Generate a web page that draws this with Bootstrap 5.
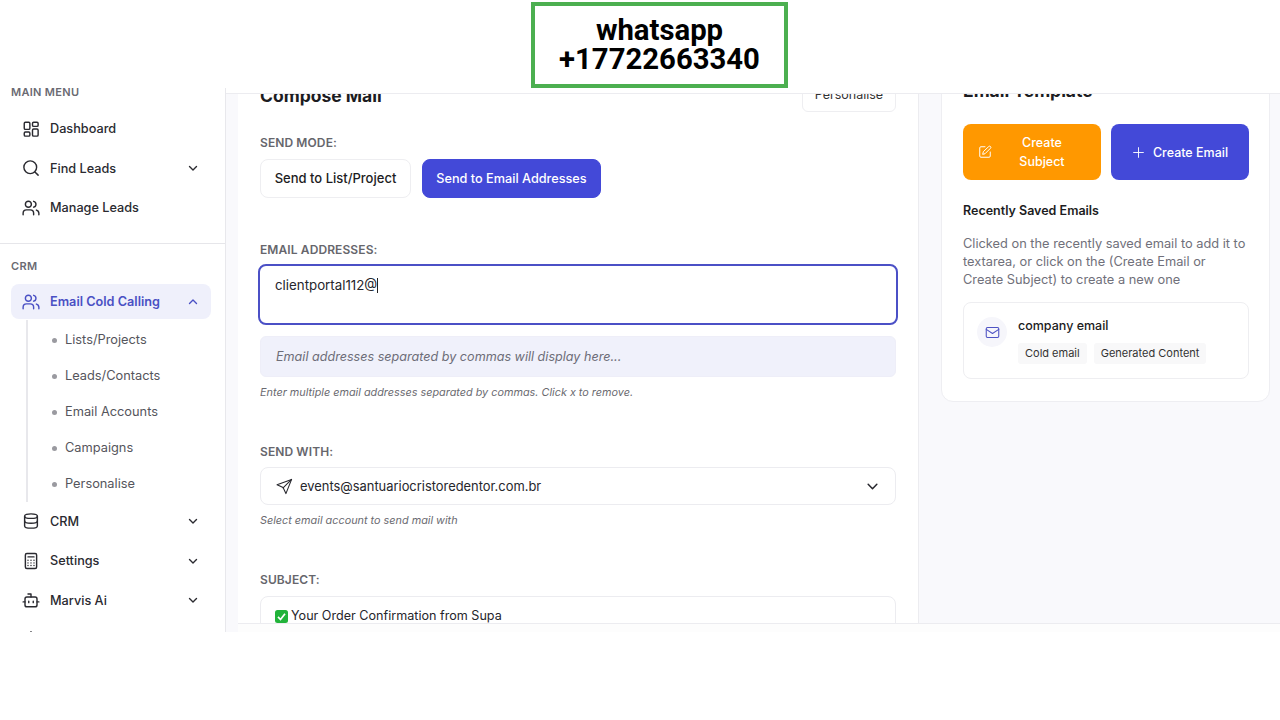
<!DOCTYPE html>
<html lang="en">
<head>
  <meta charset="UTF-8">
  <meta name="viewport" content="width=device-width, initial-scale=1.0">
  <title>Compose Mail</title>
  <link href="https://cdn.jsdelivr.net/npm/bootstrap@5.3.3/dist/css/bootstrap.min.css" rel="stylesheet">
  <style>
    body { font-family: Inter, "Liberation Sans", sans-serif; background: #fff; color: #1c1c22; font-size: 13px; overflow: hidden; }
    svg.ico { fill: none; stroke: currentColor; stroke-width: 1.7; stroke-linecap: round; stroke-linejoin: round; flex-shrink: 0; }
    svg.ico.chev { stroke-width: 1.4; }
    .side-link svg.ico:not(.chev) { stroke-width: 1.9; }

    .promo-box { position: absolute; left: 531px; top: 2px; width: 257px; height: 86px; border: 4px solid #4caf50; background: #fff; z-index: 5; font-family: Roboto, sans-serif; font-weight: 700; font-size: 29.3px; line-height: 29px; color: #000; padding-top: 10px; }

    .app-shell { margin-top: 80px; height: 552px; }
    .side-col { width: 225px; overflow: hidden; padding-top: 5px; }
    .side-label { font-size: 11px; line-height: 14px; font-weight: 600; letter-spacing: .3px; color: #6a6a72; padding-left: 11px; }
    .side-top { margin-top: 10px; }
    .side-link { height: 39.5px; margin: 0 14px 0 11px; padding: 0 12px 0 11px; gap: 10px; color: #2a2a30; font-weight: 500; font-size: 12.7px; border-radius: 8px; }
    .side-link:hover { color: #2a2a30; }
    .side-link .chev { margin-left: auto; }
    .side-link.on { height: 35px; padding-top: 1px; background: #eff0fb; color: #4a50c4; font-weight: 600; }
    .side-link.on:hover { color: #4a50c4; }
    .side-rule { border-top: 1px solid #e6e6ea; margin: 15px 0 15px; }
    .side-label-crm { margin-bottom: 11px; }
    .sub-list { margin: 1px 0 0 26px; border-left: 2px solid #e8e8ec; height: 182px; padding: 2px 0 0; list-style: none; font-size: 12.8px; }
    .sub-list li { height: 36px; display: flex; align-items: center; padding-left: 25px; color: #55555c; position: relative; }
    .sub-list li::before { content: ""; width: 5px; height: 5px; border-radius: 50%; background: #9a9aa0; position: absolute; left: 24px; top: 16px; }
    .sub-list li span { margin-left: 12px; }

    .main-col { margin-top: 8px; border-left: 1px solid #e8e8ec; min-width: 0; }
    .top-strip { height: 5px; border-bottom: 1px solid #ececf0; box-sizing: content-box; }
    .main-bg { background: #f9f9fc; padding-left: 12px; height: 538px; }
    .scroll-clip { height: 529px; overflow: hidden; background: #f9f9fc; }
    .foot-strip { height: 10px; background: #fdfdfd; border-top: 1px solid #ececf0; }
    .panel-row { gap: 22px; margin-top: -20px; }

    .compose-panel { width: 681px; height: 700px; background: #fff; border: 0; border-radius: 0; padding: 6px 22px 0; border-right: 1px solid #ececf0; flex-shrink: 0; }
    .head-row { height: 31px; }
    .head-title { font-size: 17.5px; font-weight: 700; margin: 0 0 1px; color: #1c1c22; }
    .btn-pers { width: 94px; height: 32px; padding: 0; font-size: 12.5px; background: #fff; border: 1px solid #eeeef1; border-radius: 6px; color: #333; }
    .fld-label { font-size: 12px; line-height: 16px; font-weight: 600; color: #66666c; letter-spacing: .1px; margin-bottom: 8px; display: block; }
    .gap-first { margin-top: 24px; }
    .gap-big { margin-top: 44px; }
    .mode-row { gap: 11px; }
    .mode-btn { height: 39px; font-size: 13px; font-weight: 500; border-radius: 8px; padding: 0; white-space: nowrap; }
    .mode-off { background: #fff; border: 1px solid #eeeef1; color: #1c1c22; width: 151px; }
    .mode-on { background: #4349d8; border: 1px solid #4349d8; color: #fff; width: 179px; font-size: 12.7px; }
    .mode-on:hover { background: #4349d8; color: #fff; }
    .mail-field { height: 61px; margin: -2px -2px 0; border: 2px solid #4b50c6; border-radius: 8px; padding: 11px 15px; line-height: 16px; font-size: 13.3px; color: #26262c; }
    .caret-bar { display: inline-block; width: 1px; height: 15px; background: #222; vertical-align: -3px; }
    .mail-preview { margin-top: 11px; height: 41px; background: #f0f1fb; border: 1px solid #eeeef8; border-radius: 6px; padding: 1px 0 0 15px; font-style: italic; font-size: 12.6px; color: #6d6d78; }
    .fld-hint { font-size: 10.85px; line-height: 16px; font-style: italic; color: #6a6a70; margin-top: 7px; }
    .label-tight { margin-bottom: 7px; }
    .pick-field { height: 38px; border: 1px solid #ececf0; border-radius: 8px; padding: 1px 16px 0 15px; gap: 7px; font-size: 12.9px; color: #26262c; }
    .pick-field .chev { margin-left: auto; stroke-width: 1.200; }
    .pick-field .send-ico { stroke-width: 1.500; }
    .subject-field { height: 38px; border: 1px solid #ececf0; border-radius: 8px; padding: 2px 14px 0; gap: 3px; font-size: 12.6px; color: #26262c; }

    .tpl-panel { width: 329px; height: 328px; background: #fff; border: 1px solid #eeeef2; border-radius: 0 0 12px 12px; padding: 4px 20px 0 21px; flex-shrink: 0; }
    .tpl-title { font-size: 17.5px; font-weight: 700; margin: 0; line-height: 24px; }
    .tpl-btn { width: 138px; height: 56px; border: 0; border-radius: 8px; color: #fff; font-size: 12.5px; font-weight: 500; line-height: 19px; padding: 0 15px; }
    .tpl-btn:hover { color: #fff; }
    .tpl-orange { background: #ff9800; padding-right: 9px; }
    .tpl-orange:hover { background: #ff9800; }
    .tpl-blue { background: #4349d8; }
    .tpl-blue:hover { background: #4349d8; }
    .tpl-btns { gap: 10px; margin-top: 21px; }
    .recent-head { font-size: 12.5px; font-weight: 600; margin-top: 23px; line-height: 16px; color: #1c1c22; }
    .recent-copy { font-size: 12.8px; line-height: 18px; color: #70707a; margin: 16px 0 13px; }
    .saved-item { height: 77px; border: 1px solid #eeeef1; border-radius: 8px; padding: 14px 14px 0 13px; gap: 11px; }
    .saved-dot { width: 30px; height: 30px; border-radius: 50%; background: #f6f6fb; color: #4f54c4; }
    .saved-name { font-size: 12.5px; font-weight: 500; line-height: 18px; color: #1c1c22; }
    .saved-tags { gap: 7px; }
    .saved-tag { font-size: 11px; line-height: 21px; padding: 0 7px; background: #f8f8f9; border-radius: 3px; color: #333; }
  </style>
</head>
<body>
  <div class="promo-box text-center">whatsapp<br>+17722663340</div>

  <div class="app-shell d-flex">
    <aside class="side-col flex-shrink-0">
      <div class="side-label">MAIN MENU</div>
      <nav class="nav flex-column side-top">
        <a class="nav-link side-link d-flex align-items-center" href="#">
          <svg class="ico" width="18" height="18" viewBox="0 0 24 24"><rect x="3" y="3" width="7.5" height="9.5" rx="1.5"/><rect x="14" y="3" width="7.5" height="5.5" rx="1.5"/><rect x="14" y="12" width="7.5" height="9.5" rx="1.5"/><rect x="3" y="16" width="7.5" height="5.5" rx="1.5"/></svg>
          Dashboard
        </a>
        <a class="nav-link side-link d-flex align-items-center" href="#">
          <svg class="ico" width="18" height="18" viewBox="0 0 24 24"><circle cx="11" cy="11" r="8.5"/><path d="m21.5 21.5-4.3-4.3"/></svg>
          Find Leads
          <svg class="ico chev" width="12" height="12" viewBox="0 0 12 12"><path d="m2.5 4.5 3.5 3.5 3.5-3.5"/></svg>
        </a>
        <a class="nav-link side-link d-flex align-items-center" href="#">
          <svg class="ico" width="18" height="18" viewBox="0 0 24 24"><path d="M15.5 21v-2a4.5 4.5 0 0 0-4.5-4.5H6A4.5 4.5 0 0 0 1.5 19v2"/><circle cx="8.5" cy="7" r="4"/><path d="M22.5 21v-2a4.5 4.5 0 0 0-3.3-4.2"/><path d="M15.5 3.1a4 4 0 0 1 0 7.8"/></svg>
          Manage Leads
        </a>
      </nav>
      <div class="side-rule"></div>
      <div class="side-label side-label-crm">CRM</div>
      <nav class="nav flex-column">
        <a class="nav-link side-link on d-flex align-items-center" href="#">
          <svg class="ico" width="18" height="18" viewBox="0 0 24 24"><path d="M15.5 21v-2a4.5 4.5 0 0 0-4.5-4.5H6A4.5 4.5 0 0 0 1.5 19v2"/><circle cx="8.5" cy="7" r="4"/><path d="M22.5 21v-2a4.5 4.5 0 0 0-3.3-4.2"/><path d="M15.5 3.1a4 4 0 0 1 0 7.8"/></svg>
          Email Cold Calling
          <svg class="ico chev" width="12" height="12" viewBox="0 0 12 12"><path d="m2.5 7.5 3.5-3.5 3.5 3.5"/></svg>
        </a>
        <ul class="sub-list mb-0">
          <li><span>Lists/Projects</span></li>
          <li><span>Leads/Contacts</span></li>
          <li><span>Email Accounts</span></li>
          <li><span>Campaigns</span></li>
          <li><span>Personalise</span></li>
        </ul>
        <a class="nav-link side-link d-flex align-items-center" href="#">
          <svg class="ico" width="18" height="18" viewBox="0 0 24 24"><ellipse cx="12" cy="5.5" rx="8.5" ry="3"/><path d="M3.5 5.5v13c0 1.7 3.8 3 8.5 3s8.5-1.300 8.500-3v-13"/><path d="M3.500 12c0 1.700 3.800 3 8.500 3s8.500-1.300 8.500-3"/></svg>
          CRM
          <svg class="ico chev" width="12" height="12" viewBox="0 0 12 12"><path d="m2.5 4.5 3.5 3.5 3.5-3.5"/></svg>
        </a>
        <a class="nav-link side-link d-flex align-items-center" href="#">
          <svg class="ico" width="18" height="18" viewBox="0 0 24 24"><rect x="4.500" y="2" width="15" height="20" rx="2"/><path d="M8 6.500h8M8 11h.01M12 11h.01M16 11h.01M8 14.500h.01M12 14.500h.01M16 14.500h.01M8 18h.01M12 18h.01M16 18h.01"/></svg>
          Settings
          <svg class="ico chev" width="12" height="12" viewBox="0 0 12 12"><path d="m2.5 4.500 3.500 3.500 3.500-3.500"/></svg>
        </a>
        <a class="nav-link side-link d-flex align-items-center" href="#">
          <svg class="ico" width="18" height="18" viewBox="0 0 24 24"><path d="M12 8V4H8"/><rect x="4" y="8" width="16" height="13" rx="2.500"/><path d="M1.500 14.500H4M20 14.500h2.500M9 13.500v2M15 13.500v2"/></svg>
          Marvis Ai
          <svg class="ico chev" width="12" height="12" viewBox="0 0 12 12"><path d="m2.500 4.500 3.500 3.500 3.500-3.500"/></svg>
        </a>
        <a class="nav-link side-link d-flex align-items-center" href="#">
          <svg class="ico" width="18" height="18" viewBox="0 0 24 24"><path d="M12 1v3"/><circle cx="12" cy="13" r="9"/></svg>
        </a>
      </nav>
    </aside>

    <main class="main-col flex-grow-1">
      <div class="top-strip"></div>
      <div class="main-bg">
        <div class="scroll-clip">
          <div class="panel-row d-flex align-items-start">
            <section class="card compose-panel">
              <div class="head-row d-flex justify-content-between align-items-center">
                <h2 class="head-title">Compose Mail</h2>
                <button class="btn btn-pers" type="button">Personalise</button>
              </div>

              <label class="fld-label gap-first">SEND MODE:</label>
              <div class="d-flex mode-row">
                <button class="btn mode-btn mode-off" type="button">Send to List/Project</button>
                <button class="btn mode-btn mode-on" type="button">Send to Email Addresses</button>
              </div>

              <label class="fld-label gap-big">EMAIL ADDRESSES:</label>
              <div class="mail-field">clientportal112@<span class="caret-bar"></span></div>
              <div class="mail-preview d-flex align-items-center">Email addresses separated by commas will display here...</div>
              <div class="fld-hint">Enter multiple email addresses separated by commas. Click x to remove.</div>

              <label class="fld-label gap-big label-tight">SEND WITH:</label>
              <div class="pick-field d-flex align-items-center">
                <svg class="ico send-ico" width="17" height="17" viewBox="0 0 24 24"><path d="M22 2 1.500 9.500l8.500 4 4 8.500z"/><path d="M10 14 22 2"/></svg>
                events@santuariocristoredentor.com.br
                <svg class="ico chev" width="13" height="13" viewBox="0 0 12 12"><path d="m2 4 4 4 4-4"/></svg>
              </div>
              <div class="fld-hint">Select email account to send mail with</div>

              <label class="fld-label gap-big">SUBJECT:</label>
              <div class="subject-field d-flex align-items-center">
                <svg width="13" height="13" viewBox="0 0 13 13"><rect width="13" height="13" rx="2.500" fill="#21b33a"/><path d="m3 6.800 2.500 2.700L10 3.800" fill="none" stroke="#fff" stroke-width="1.700"/></svg>
                Your Order Confirmation from Supa
              </div>
            </section>

            <section class="card tpl-panel">
              <h2 class="tpl-title">Email Template</h2>
              <div class="tpl-btns d-flex">
                <button class="btn tpl-btn tpl-orange d-flex align-items-center" type="button">
                  <svg class="ico" width="14" height="14" viewBox="0 0 24 24"><path d="M12 3H5a2 2 0 0 0-2 2v14a2 2 0 0 0 2 2h14a2 2 0 0 0 2-2v-7"/><path d="M18.400 2.600a2 2 0 0 1 3 3L12 15l-4 1 1-4z"/></svg>
                  <span class="flex-grow-1 text-center">Create<br>Subject</span>
                </button>
                <button class="btn tpl-btn tpl-blue d-flex align-items-center justify-content-center gap-2" type="button">
                  <svg class="ico" width="13" height="13" viewBox="0 0 24 24"><path d="M12 3v18M3 12h18"/></svg>
                  Create Email
                </button>
              </div>
              <div class="recent-head">Recently Saved Emails</div>
              <p class="recent-copy">Clicked on the recently saved email to add it to textarea, or click on the (Create Email or Create Subject) to create a new one</p>
              <div class="saved-item d-flex">
                <div class="saved-dot d-flex align-items-center justify-content-center flex-shrink-0">
                  <svg class="ico" width="15" height="15" viewBox="0 0 24 24"><rect x="2" y="4" width="20" height="16" rx="2"/><path d="m2 7 10 6.500L22 7"/></svg>
                </div>
                <div>
                  <div class="saved-name">company email</div>
                  <div class="d-flex mt-2 saved-tags">
                    <span class="saved-tag">Cold email</span>
                    <span class="saved-tag">Generated Content</span>
                  </div>
                </div>
              </div>
            </section>
          </div>
        </div>
        <div class="foot-strip"></div>
      </div>
    </main>
  </div>

  <script src="https://cdn.jsdelivr.net/npm/bootstrap@5.3.3/dist/js/bootstrap.bundle.min.js"></script>
</body>
</html>
